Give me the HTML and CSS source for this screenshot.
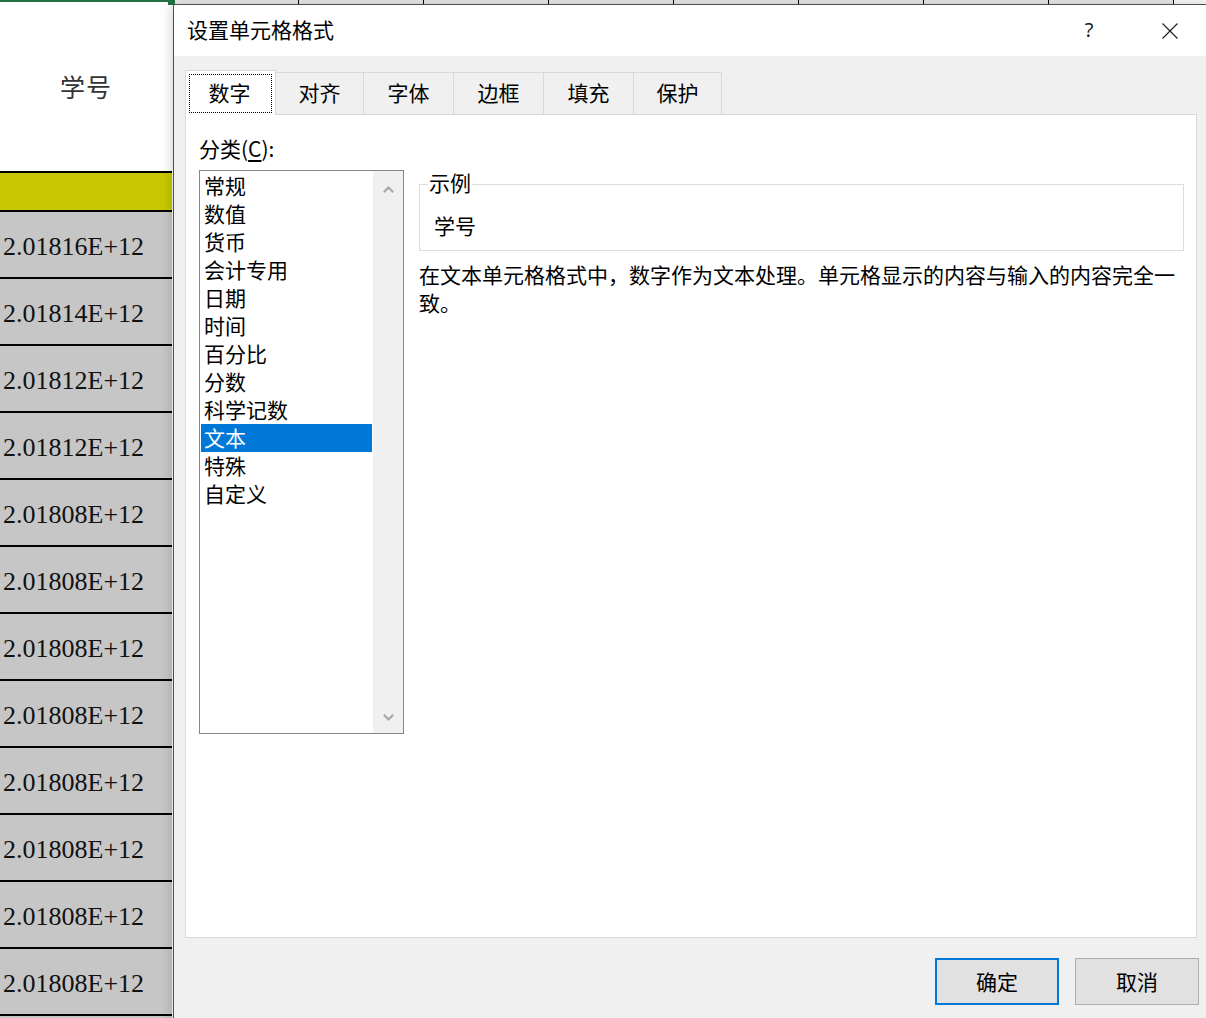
FILE: index.html
```html
<!DOCTYPE html>
<html lang="zh-CN">
<head>
<meta charset="utf-8">
<title>设置单元格格式</title>
<link rel="stylesheet" href="styles.css">
</head>
<body>
<div class="sheet">
  <div class="col-a">
    <div class="cell-head">学号</div>
    <div class="cell-yellow"></div>
    <div class="cell">2.01816E+12</div>
    <div class="cell">2.01814E+12</div>
    <div class="cell">2.01812E+12</div>
    <div class="cell">2.01812E+12</div>
    <div class="cell">2.01808E+12</div>
    <div class="cell">2.01808E+12</div>
    <div class="cell">2.01808E+12</div>
    <div class="cell">2.01808E+12</div>
    <div class="cell">2.01808E+12</div>
    <div class="cell">2.01808E+12</div>
    <div class="cell">2.01808E+12</div>
    <div class="cell">2.01808E+12</div>
    <div class="cell"></div>
  </div>
  <div class="col-rest">
    <div class="hcell hcell-first"></div>
    <div class="hcell"></div>
    <div class="hcell"></div>
    <div class="hcell"></div>
    <div class="hcell"></div>
    <div class="hcell"></div>
    <div class="hcell"></div>
    <div class="hcell"></div>
  </div>
</div>
<div class="fill-handle"></div>

<div class="dialog">
  <div class="titlebar">
    <span class="title">设置单元格格式</span>
    <span class="tb-btn help">?</span>
    <span class="tb-btn close">
      <svg width="16" height="16" viewBox="0 0 16 16"><path d="M0.5 0.5 L15.5 15.5 M15.5 0.5 L0.5 15.5" stroke="#1a1a1a" stroke-width="1.1" fill="none"/></svg>
    </span>
  </div>
  <div class="body">
    <div class="tabs">
      <div class="tab tab-sel"><div class="focus">数字</div></div>
      <div class="tab tab-narrow">对齐</div>
      <div class="tab">字体</div>
      <div class="tab">边框</div>
      <div class="tab">填充</div>
      <div class="tab tab-narrow">保护</div>
    </div>
    <div class="panel">
      <div class="left">
        <div class="label">分类(<u>C</u>):</div>
        <div class="listbox">
          <ul class="items">
            <li>常规</li>
            <li>数值</li>
            <li>货币</li>
            <li>会计专用</li>
            <li>日期</li>
            <li>时间</li>
            <li>百分比</li>
            <li>分数</li>
            <li>科学记数</li>
            <li class="sel">文本</li>
            <li>特殊</li>
            <li>自定义</li>
          </ul>
          <div class="scroll">
            <svg width="11" height="7" viewBox="0 0 11 7"><polyline points="0.8,6.2 5.5,1.5 10.2,6.2" stroke="#a6a6a6" stroke-width="2" fill="none"/></svg>
            <svg width="11" height="7" viewBox="0 0 11 7"><polyline points="0.8,0.8 5.5,5.5 10.2,0.8" stroke="#a6a6a6" stroke-width="2" fill="none"/></svg>
          </div>
        </div>
      </div>
      <div class="right">
        <fieldset class="group">
          <legend>示例</legend>
          <div class="sample">学号</div>
        </fieldset>
        <p class="desc">在文本单元格格式中，数字作为文本处理。单元格显示的内容与输入的内容完全一致。</p>
      </div>
    </div>
    <div class="buttons">
      <button class="btn btn-primary">确定</button>
      <button class="btn">取消</button>
    </div>
  </div>
</div>
</body>
</html>
```

FILE: styles.css
```css
* { box-sizing: border-box; }
html, body { margin: 0; padding: 0; }
body {
  width: 1206px;
  height: 1018px;
  overflow: hidden;
  position: relative;
  background: #fff;
  font-family: "Noto Sans CJK SC", "Noto Sans", sans-serif;
  color: #000;
}

/* spreadsheet behind */
.sheet { display: flex; height: 1018px; }
.col-a { width: 172px; flex: none; }
.cell-head {
  height: 173px;
  border-top: 2px solid #217346;
  border-bottom: 2px solid #000;
  display: flex;
  align-items: center;
  justify-content: center;
  padding-bottom: 1px;
  font-size: 25px;
  color: #333;
  letter-spacing: 1px;
}
.cell-yellow {
  height: 39px;
  background: #c8c800;
  border-bottom: 2px solid #000;
}
.cell {
  height: 67px;
  background: #c6c6c6;
  border-bottom: 2px solid #000;
  display: flex;
  align-items: center;
  padding: 5px 0 0 3px;
  font-family: "Liberation Serif", "DejaVu Serif", serif;
  font-size: 26px;
  color: #111;
  white-space: nowrap;
}
.col-rest { flex: 1; display: flex; align-items: flex-start; }
.hcell {
  flex: none;
  width: 125px;
  height: 5px;
  background: #ececec;
  border-bottom: 1px solid #9c9c9c;
  border-right: 1px solid #000;
}
.hcell-first { width: 127px; }
.fill-handle {
  position: absolute;
  left: 168px;
  top: 0;
  width: 7px;
  height: 5px;
  background: #217346;
}

/* dialog window */
.dialog {
  position: absolute;
  left: 173px;
  top: 4px;
  width: 1036px;
  height: 1030px;
  border: 1px solid #4f4f4f;
  background: #f0f0f0;
  box-shadow: 0 0 12px rgba(0, 0, 0, 0.22);
  display: flex;
  flex-direction: column;
}
.titlebar {
  height: 51px;
  background: #fff;
  display: flex;
  align-items: center;
  padding: 0 18px 4px 13px;
  font-size: 21px;
}
.title { flex: 1; }
.tb-btn {
  width: 40px;
  display: flex;
  justify-content: center;
  align-items: center;
}
.help {
  font-family: "Noto Sans", sans-serif;
  font-size: 20px;
  font-weight: 400;
  color: #222;
  margin-right: 41px;
  padding-top: 2px;
}
.close { padding-top: 4px; }
.close svg { display: block; }

.body { padding-top: 14px; }
.tabs {
  display: flex;
  align-items: flex-end;
  height: 45px;
  margin-left: 11px;
  margin-bottom: -1px;
  position: relative;
  z-index: 1;
}
.tab {
  width: 91px;
  height: 42px;
  margin-bottom: 1px;
  margin-left: -1px;
  border: 1px solid #d9d9d9;
  border-bottom: 0;
  background: #f0f0f0;
  display: flex;
  align-items: center;
  justify-content: center;
  padding-bottom: 3px;
  font-size: 21px;
  line-height: 1;
}
.tab-narrow { width: 89px; }
.tab-sel {
  width: 91px;
  margin-left: 0;
  margin-bottom: 0;
  height: 45px;
  background: #fff;
  padding: 3px 3px 0;
  align-items: flex-start;
}
.focus {
  width: 100%;
  height: 39px;
  border: 1px dotted #000;
  display: flex;
  align-items: center;
  justify-content: center;
  padding: 0 2px 3px 0;
}

.panel {
  height: 824px;
  margin: 0 11px;
  background: #fff;
  border: 1px solid #d9d9d9;
  display: flex;
  padding: 20px 12px 0 13px;
}
.left { width: 205px; flex: none; }
.label {
  font-size: 21px;
  line-height: 26px;
  height: 26px;
}
.label u { text-underline-offset: 3px; }
.listbox {
  margin-top: 9px;
  width: 205px;
  height: 564px;
  border: 1px solid #828790;
  display: flex;
}
.items {
  list-style: none;
  margin: 0;
  padding: 1px;
  flex: 1;
}
.items li {
  height: 28px;
  line-height: 26px;
  padding-left: 3px;
  font-size: 21px;
  white-space: nowrap;
}
.items li.sel { background: #0078d7; color: #fff; }
.scroll {
  width: 30px;
  flex: none;
  background: #f0f0f0;
  display: flex;
  flex-direction: column;
  justify-content: space-between;
  align-items: center;
  padding: 15px 0 12px;
}
.scroll svg { display: block; }

.right {
  width: 765px;
  margin-left: 15px;
  margin-top: 36px;
}
.group {
  margin: 0;
  padding: 0 0 0 8px;
  border: 1px solid #dcdcdc;
  min-width: 0;
}
.group legend {
  padding: 0 1px 4px;
  font-size: 21px;
  line-height: 22px;
}
.sample {
  padding: 14px 0 11px 6px;
  font-size: 21px;
  line-height: 28px;
}
.desc {
  margin: 9px 0 0;
  font-size: 21px;
  line-height: 28px;
}

.buttons {
  display: flex;
  justify-content: flex-end;
  gap: 16px;
  padding-right: 9px;
  margin-top: 20px;
}
.btn {
  width: 124px;
  height: 47px;
  background: #e1e1e1;
  border: 1px solid #adadad;
  font-family: "Noto Sans CJK SC", sans-serif;
  font-size: 21px;
  color: #000;
  padding: 0 0 2px;
}
.btn-primary { border: 2px solid #0078d7; }
```
